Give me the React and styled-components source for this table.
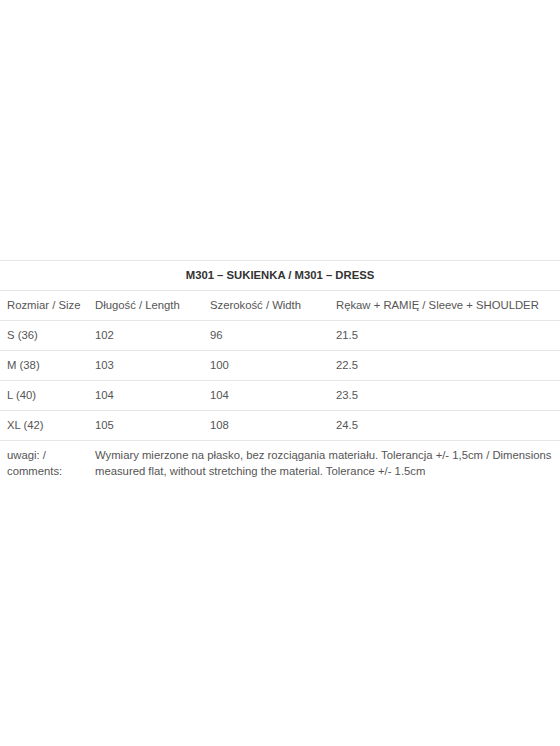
import React from 'react';
import styled, { createGlobalStyle } from 'styled-components';

const GlobalStyle = createGlobalStyle`
  html, body {
    margin: 0;
    padding: 0;
    background: #fff;
  }
  body {
    font-family: "Liberation Sans", Arial, sans-serif;
  }
`;

const Page = styled.div`
  min-height: 100vh;
  display: flex;
  flex-direction: column;
  justify-content: center;
`;

const SizeTable = styled.table`
  width: 100%;
  border-collapse: collapse;
  font-size: 11.3px;
  color: #555;
`;

const Row = styled.tr`
  border-top: 1px solid #e6e6e6;
`;

const Cell = styled.td`
  padding: 7px 7px;
  line-height: 15px;
  height: 15px;
  text-align: left;
  vertical-align: middle;
  white-space: nowrap;
  font-weight: normal;
`;

const TitleCell = styled.td`
  padding: 7px 7px;
  line-height: 15px;
  text-align: center;
  font-weight: bold;
  color: #333;
`;

const NoteCell = styled.td`
  padding: 6px 3px 7px 7px;
  line-height: 16px;
  vertical-align: top;
`;

const rows = [
  ['S (36)', '102', '96', '21.5'],
  ['M (38)', '103', '100', '22.5'],
  ['L (40)', '104', '104', '23.5'],
  ['XL (42)', '105', '108', '24.5'],
];

export default function App() {
  return (
    <>
      <GlobalStyle />
      <Page>
        <SizeTable>
          <colgroup>
            <col style={{ width: '88px' }} />
            <col style={{ width: '115px' }} />
            <col style={{ width: '126px' }} />
            <col />
          </colgroup>
          <tbody>
            <Row>
              <TitleCell colSpan={4}>M301 – SUKIENKA / M301 – DRESS</TitleCell>
            </Row>
            <Row>
              <Cell>Rozmiar / Size</Cell>
              <Cell>Długość / Length</Cell>
              <Cell>Szerokość / Width</Cell>
              <Cell>Rękaw + RAMIĘ / Sleeve + SHOULDER</Cell>
            </Row>
            {rows.map((r) => (
              <Row key={r[0]}>
                {r.map((v, i) => (
                  <Cell key={i}>{v}</Cell>
                ))}
              </Row>
            ))}
            <Row>
              <NoteCell>uwagi: / comments:</NoteCell>
              <NoteCell colSpan={3}>
                Wymiary mierzone na płasko, bez rozciągania materiału. Tolerancja +/- 1,5cm / Dimensions
                measured flat, without stretching the material. Tolerance +/- 1.5cm
              </NoteCell>
            </Row>
          </tbody>
        </SizeTable>
      </Page>
    </>
  );
}
